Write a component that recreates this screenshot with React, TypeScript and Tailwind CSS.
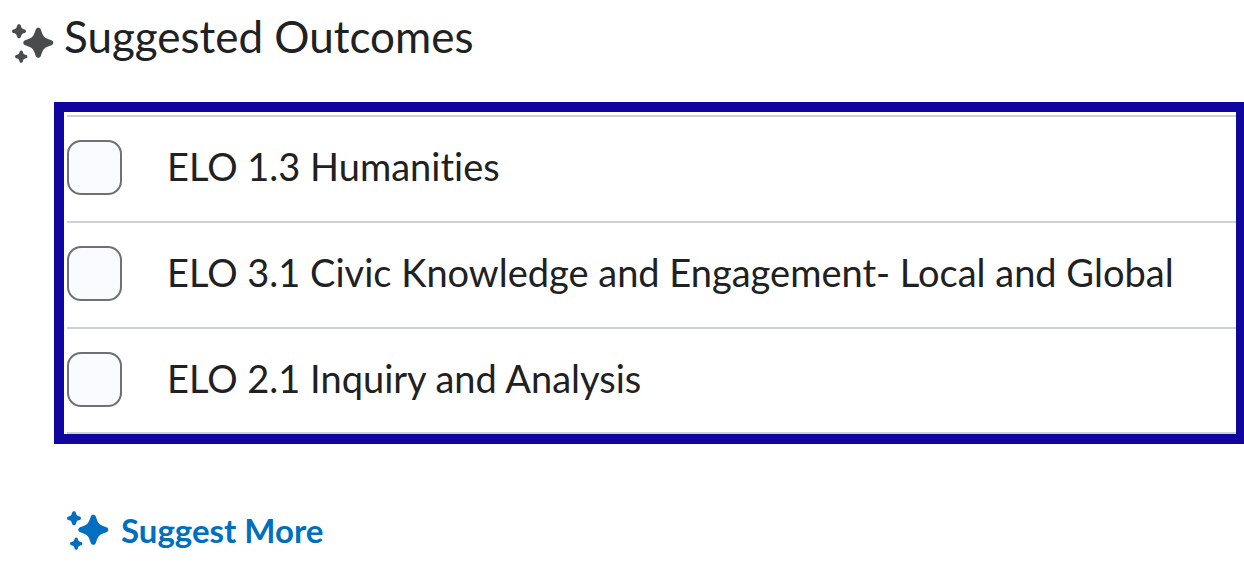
import clsx from "clsx";

const outcomes = [
  { id: "elo-1-3", label: "ELO 1.3 Humanities" },
  {
    id: "elo-3-1",
    label: "ELO 3.1 Civic Knowledge and Engagement- Local and Global",
  },
  { id: "elo-2-1", label: "ELO 2.1 Inquiry and Analysis" },
];

// four-pointed stars centred on 0,0: the big one has a radius of 15,
// the small one a radius of 7 and blunter points
const STAR =
  "M0-15C1.2-15 2.1-14.4 2.5-13.2C4-8.8 4.6-7.4 6-6C7.4-4.6 8.8-4 13.2-2.5C14.4-2.1 15-1.2 15 0C15 1.2 14.4 2.1 13.2 2.5C8.8 4 7.4 4.6 6 6C4.6 7.4 4 8.8 2.5 13.2C2.1 14.4 1.2 15 0 15C-1.2 15-2.1 14.4-2.5 13.2C-4 8.8-4.6 7.4-6 6C-7.4 4.6-8.8 4-13.2 2.5C-14.4 2.1-15 1.2-15 0C-15-1.2-14.4-2.1-13.2-2.5C-8.8-4-7.4-4.6-6-6C-4.6-7.4-4-8.8-2.5-13.2C-2.1-14.4-1.2-15 0-15Z";
const SMALL_STAR =
  "M0-7C.9-7 1.5-6.5 1.8-5.7C2.3-4 2.4-3.5 3-3C3.5-2.4 4-2.3 5.7-1.8C6.5-1.5 7-.9 7 0C7 .9 6.5 1.5 5.7 1.8C4 2.3 3.5 2.4 3 3C2.4 3.5 2.3 4 1.8 5.7C1.5 6.5 .9 7 0 7C-.9 7-1.5 6.5-1.8 5.7C-2.3 4-2.4 3.5-3 3C-3.5 2.4-4 2.3-5.7 1.8C-6.5 1.5-7 .9-7 0C-7-.9-6.5-1.5-5.7-1.8C-4-2.3-3.5-2.4-3-3C-2.4-3.5-2.3-4-1.8-5.7C-1.5-6.5-.9-7 0-7Z";

const Sparkles = ({ className }: { className?: string }) => (
  <svg
    viewBox="0 0 42 40"
    fill="currentColor"
    aria-hidden="true"
    className={clsx("h-10 w-[42px] shrink-0", className)}
  >
    <path d={STAR} transform="translate(26.3 18.8)" />
    <path d={SMALL_STAR} transform="translate(7 7.2)" />
    <path d={SMALL_STAR} transform="translate(9.2 32.7) scale(.88)" />
  </svg>
);

const OutcomeRow = ({ id, label }: { id: string; label: string }) => (
  <li className="flex h-[106px] items-center border-b-2 border-[#cdd2d6] pb-1 last:h-[105px] last:pb-[3px]">
    <input
      type="checkbox"
      id={id}
      className="size-[55px] shrink-0 appearance-none rounded-[14px] border-2 border-[#6e7074] bg-[#f9fbff] checked:bg-[#006fbf]"
    />
    <label
      htmlFor={id}
      className="flex-1 pb-[2px] pl-[45px] text-[38px] leading-[48px]"
    >
      {label}
    </label>
  </li>
);

const App = () => {
  return (
    <main className="bg-white pt-[10px] font-['Lato',sans-serif] text-[#202122] [font-variant-ligatures:no-common-ligatures]">
      <header className="flex items-center gap-[10px] pl-3">
        <Sparkles className="mt-3 -mb-1 text-[#494c4e]" />
        <h1 className="text-[44px] leading-[52px]">Suggested Outcomes</h1>
      </header>

      <section
        aria-label="Suggested Outcomes"
        className="mt-10 ml-[54px] border-[10px] border-r-8 border-[#10069f] pt-[3px] pl-[3px]"
      >
        <ul className="border-t-2 border-[#cdd2d6]">
          {outcomes.map((outcome) => (
            <OutcomeRow key={outcome.id} {...outcome} />
          ))}
        </ul>
      </section>

      <button
        type="button"
        className="mt-[66px] ml-[67px] flex items-center gap-3 text-[33px] leading-10 font-bold text-[#006fbf]"
      >
        <Sparkles className="mb-[2px]" />
        <span className="pb-1">Suggest More</span>
      </button>
    </main>
  );
};

export default App;
